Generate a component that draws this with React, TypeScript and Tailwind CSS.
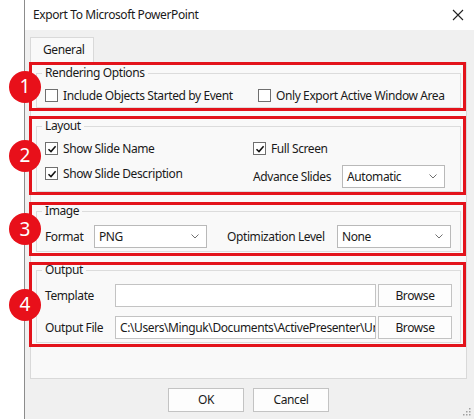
import React from "react";

const font = { fontFamily: '"Noto Sans", "Open Sans", sans-serif' };

function Badge({ n }: { n: number }) {
  return (
    <div className="absolute left-[-23px] top-1/2 -translate-y-1/2 flex h-[32px] w-[32px] items-center justify-center rounded-full bg-[#e8101a] text-[19px] leading-none tracking-normal text-white">
      {n}
    </div>
  );
}

function Check({ checked, label }: { checked?: boolean; label: string }) {
  return (
    <div className="flex h-[17px] items-center gap-[5px] whitespace-nowrap">
      <span className="flex h-[13px] w-[13px] shrink-0 items-center justify-center border border-[#6f6f6f] bg-white">
        {checked && (
          <svg width="10" height="10" viewBox="0 0 10 10">
            <path d="M1.5 5.2 L4 7.6 L8.6 2.2" fill="none" stroke="#111" strokeWidth="1.5" />
          </svg>
        )}
      </span>
      <span>{label}</span>
    </div>
  );
}

function Select({ value, w }: { value: string; w: string }) {
  return (
    <div className={`flex h-[23px] shrink-0 items-center justify-between border border-[#b9b9b9] bg-white pl-[4px] pr-[7px] ${w}`}>
      <span>{value}</span>
      <svg width="8" height="5" viewBox="0 0 8 5">
        <path d="M0.5 0.5 L4 4 L7.5 0.5" fill="none" stroke="#707070" strokeWidth="1" />
      </svg>
    </div>
  );
}

function Group({ title, mt, children }: { title: string; mt: string; children: React.ReactNode }) {
  return (
    <fieldset className={`ml-[4px] mr-[2px] min-w-0 border border-[#dcdcdc] pl-[8px] pr-[8px] pt-[7px] pb-[3px] ${mt}`}>
      <legend className="-ml-[3px] px-[3px] leading-[14px] text-[#1a1a1a]">{title}</legend>
      {children}
    </fieldset>
  );
}

function Btn({ label, w }: { label: string; w: string }) {
  return (
    <div className={`flex h-[23px] shrink-0 items-center justify-center border border-[#c3c3c3] bg-[#fdfdfd] ${w}`}>
      {label}
    </div>
  );
}

export default function App() {
  return (
    <div style={font} className="flex h-[419px] w-[474px] overflow-hidden bg-white text-[12px] tracking-[-0.4px] text-[#1a1a1a]">
      <div className="w-[24px] shrink-0 bg-white" />
      <div className="flex flex-1 flex-col border-l border-[#8c8c8c]">
        {/* title bar */}
        <div className="flex h-[30px] shrink-0 items-center justify-between bg-white pl-[8px] pr-[10px]">
          <span className="text-[12px]">Export To Microsoft PowerPoint</span>
          <svg width="12" height="12" viewBox="0 0 12 12">
            <path d="M1 1 L11 11 M11 1 L1 11" stroke="#222" strokeWidth="1.1" />
          </svg>
        </div>

        <div className="relative flex flex-1 flex-col bg-[#f0f0f0] pl-[5px] pr-[7px]">
          {/* tabs */}
          <div className="mt-[7px] flex h-[25px]">
            <div className="flex w-[64px] items-center border border-b-0 border-[#d9d9d9] bg-[#f9f9f9] pl-[12px]">
              General
            </div>
          </div>

          {/* panel */}
          <div className="flex h-[317px] flex-col border border-[#d9d9d9] bg-[#f9f9f9]">
            {/* 1 */}
            <div className="relative -ml-[2px] -mt-[1px] h-[49px] w-[437px] border-[3px] border-[#e3131b]">
              <Badge n={1} />
              <Group title="Rendering Options" mt="mt-[1px]">
                <div className="flex">
                  <div className="w-[213px] shrink-0">
                    <Check label="Include Objects Started by Event" />
                  </div>
                  <Check label="Only Export Active Window Area" />
                </div>
              </Group>
            </div>

            {/* 2 */}
            <div className="relative -ml-[2px] mt-[5px] h-[79px] w-[437px] border-[3px] border-[#e3131b]">
              <Badge n={2} />
              <Group title="Layout" mt="mt-0">
                <div className="flex">
                  <div className="flex w-[208px] shrink-0 flex-col gap-[8px]">
                    <Check checked label="Show Slide Name" />
                    <Check checked label="Show Slide Description" />
                  </div>
                  <div className="flex flex-col gap-[8px]">
                    <Check checked label="Full Screen" />
                    <div className="flex items-center">
                      <span className="w-[89px] shrink-0">Advance Slides</span>
                      <Select value="Automatic" w="w-[103px]" />
                    </div>
                  </div>
                </div>
              </Group>
            </div>

            {/* 3 */}
            <div className="relative -ml-[2px] mt-[7px] h-[54px] w-[437px] border-[3px] border-[#e3131b]">
              <Badge n={3} />
              <Group title="Image" mt="-mt-[1px]">
                <div className="grid grid-cols-[49px_113px_20px_110px_114px] items-center">
                  <span>Format</span>
                  <Select value="PNG" w="w-[113px]" />
                  <span />
                  <span className="whitespace-nowrap">Optimization Level</span>
                  <Select value="None" w="w-[114px]" />
                </div>
              </Group>
            </div>

            {/* 4 */}
            <div className="relative -ml-[2px] mt-[6px] h-[85px] w-[437px] border-[3px] border-[#e3131b]">
              <Badge n={4} />
              <Group title="Output" mt="-mt-[2px]">
                <div className="flex flex-col gap-[9px]">
                  <div className="flex items-center">
                    <span className="w-[70px] shrink-0">Template</span>
                    <div className="h-[23px] w-[261px] shrink-0 border border-[#c3c3c3] bg-white" />
                    <Btn label="Browse" w="ml-[2px] w-[74px]" />
                  </div>
                  <div className="flex items-center">
                    <span className="w-[70px] shrink-0">Output File</span>
                    <div className="flex h-[23px] w-[261px] shrink-0 items-center overflow-hidden whitespace-nowrap border border-[#c3c3c3] bg-white pl-[4px]">
                      C:\Users\Minguk\Documents\ActivePresenter\Untitled
                    </div>
                    <Btn label="Browse" w="ml-[2px] w-[74px]" />
                  </div>
                </div>
              </Group>
            </div>
          </div>

          {/* buttons */}
          <div className="mt-[9px] flex justify-center gap-[9px]">
            <Btn label="OK" w="h-[24px] w-[76px]" />
            <Btn label="Cancel" w="h-[24px] w-[76px]" />
          </div>

          <svg className="absolute bottom-[3px] right-[3px]" width="8" height="8" viewBox="0 0 8 8">
            <rect x="6" y="0" width="1.5" height="1.5" fill="#a0a0a0" />
            <rect x="3" y="3" width="1.5" height="1.5" fill="#a0a0a0" />
            <rect x="6" y="3" width="1.5" height="1.5" fill="#a0a0a0" />
            <rect x="0" y="6" width="1.5" height="1.5" fill="#a0a0a0" />
            <rect x="3" y="6" width="1.5" height="1.5" fill="#a0a0a0" />
            <rect x="6" y="6" width="1.5" height="1.5" fill="#a0a0a0" />
          </svg>
        </div>
      </div>
    </div>
  );
}
